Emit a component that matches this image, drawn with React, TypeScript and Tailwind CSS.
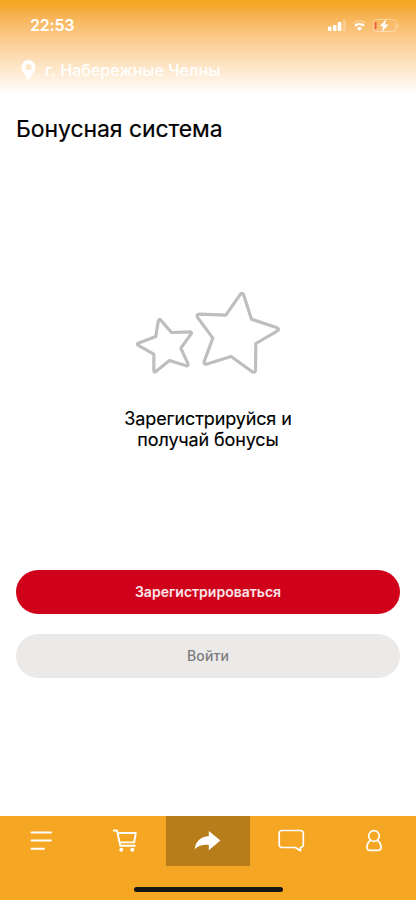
import type { ReactNode } from 'react';

interface NavItem {
  label: string;
  active?: boolean;
  icon: ReactNode;
}

const NAV_ITEMS: NavItem[] = [
  {
    label: 'menu',
    icon: <path d="M5.500 7.500h19.500M5.500 15.500h19.500M5.500 23.700h12.500" strokeWidth="1.900" />,
  },
  {
    label: 'cart',
    icon: (
      <>
        <path d="M4.700 5.500h3.300l3.300 15.200h14.500M8.500 8h18.300l-1.600 9.400H10.700" strokeWidth="1.900" />
        <circle cx="12.300" cy="24.700" r="2" fill="currentColor" stroke="none" />
        <circle cx="23.300" cy="24.700" r="2" fill="currentColor" stroke="none" />
      </>
    ),
  },
  {
    label: 'share',
    active: true,
    icon: (
      <path
        d="M16.800 6L28.400 15.600 16.800 25.300v-5.400c-6-.2-10.300.7-14 4.400C3.300 16.500 8.500 11.600 16.800 11.200z"
        fill="currentColor"
        stroke="none"
      />
    ),
  },
  {
    label: 'chat',
    icon: (
      <path
        d="M7 5.500h18.500a2.800 2.800 0 0 1 2.800 2.800v11.400a2.800 2.800 0 0 1-2.800 2.800v3.200L20.300 22.500H7a2.800 2.800 0 0 1-2.800-2.800V8.300A2.800 2.800 0 0 1 7 5.500z"
        strokeWidth="1.700"
      />
    ),
  },
  {
    label: 'profile',
    icon: (
      <>
        <circle cx="16" cy="11" r="5.300" strokeWidth="1.700" />
        <path
          d="M12.700 15.300c-2.400 1.500-3.700 4.100-3.700 7.300 0 1.800.9 2.700 2.500 2.700h9c1.600 0 2.500-.9 2.500-2.700 0-3.200-1.300-5.800-3.700-7.300"
          strokeWidth="1.700"
        />
      </>
    ),
  },
];

function StatusIcons() {
  return (
    <svg className="h-4 w-[72px] text-white" viewBox="0 0 72 16" fill="currentColor">
      <rect x="0" y="9.500" width="3.500" height="4.500" rx="0.800" />
      <rect x="5" y="8" width="3.500" height="6" rx="0.800" />
      <rect x="9.700" y="5" width="3.700" height="9" rx="0.800" />
      <rect x="14.800" y="2.500" width="3.200" height="11.500" rx="0.800" opacity="0.250" />
      <path d="M25.300 6.200a9.500 9.500 0 0 1 12.500 0" fill="none" stroke="currentColor" strokeWidth="2" opacity="0.250" />
      <path d="M27 8.900a6.800 6.800 0 0 1 9 0" fill="none" stroke="currentColor" strokeWidth="2.300" />
      <path d="M28.900 11.200a3.900 3.900 0 0 1 5.200 0l-2.600 2.800z" />
      <rect x="45.500" y="2.500" width="22.500" height="12" rx="3.300" fill="none" stroke="currentColor" strokeOpacity="0.400" />
      <path d="M69.500 6.500c1.600.5 1.600 3.500 0 4z" opacity="0.400" />
      <rect x="46.500" y="4.800" width="2" height="7.400" rx="0.600" fill="#ee6340" />
      <path d="M58.300 2l-6.600 7.300h3.600L53.700 15l7-7.600H57z" />
    </svg>
  );
}

function Stars() {
  return (
    <svg
      className="h-[86px] w-[146px]"
      viewBox="45.500 28.500 438 258"
      fill="none"
      stroke="#bebebe"
      strokeWidth="9.500"
      strokeLinejoin="round"
    >
      <path d="M362 41q5-6 9 1l24 74 77 26q7 4 1 9l-65 38-1 81q-3 8-10 4l-63-46-75 23q-8 0-6-8l26-70-47-64q-2-7 6-8l80 3z" />
      <path d="M117 119q3-5 6 0l32 37 56-2q6 2 3 6l-31 43 22 48q0 6-6 5l-50-16-42 34q-5 2-5-4V221l-48-27q-4-4 1-6l53-20 7-45z" />
    </svg>
  );
}

function BottomNav() {
  return (
    <nav className="flex h-[84px] flex-col bg-[#f5a623]">
      <div className="flex h-[50px]">
        {NAV_ITEMS.map(item => (
          <button
            key={item.label}
            aria-label={item.label}
            className={`flex flex-1 items-center justify-center text-white ${
              item.active ? 'bg-[#b87d1b]' : ''
            }`}
          >
            <svg
              className="size-8"
              viewBox="0 0 32 32"
              fill="none"
              stroke="currentColor"
              strokeLinecap="round"
              strokeLinejoin="round"
            >
              {item.icon}
            </svg>
          </button>
        ))}
      </div>
      <div className="mx-auto mt-[21px] h-[5px] w-[149px] rounded-full bg-[#151515]" />
    </nav>
  );
}

export default function App() {
  return (
    <div className="flex h-[900px] w-[416px] flex-col overflow-hidden bg-white font-['Inter','Liberation_Sans',sans-serif] text-black">
      <header className="h-[94px] bg-linear-to-b from-[#f5a623] from-4% to-white text-white">
        <div className="flex h-[50px] items-center justify-between pr-[16px] pl-[30px]">
          <span className="text-[16px] font-semibold tracking-[-0.2px]">22:53</span>
          <StatusIcons />
        </div>
        <div className="flex h-10 items-center pl-[21px]">
          <svg className="h-[21px] w-[15px]" viewBox="0 0 15 21" fill="currentColor">
            <path
              fillRule="evenodd"
              d="M7.500 0A7 7 0 0 0 .5 7c0 4.500 4.500 9 7 13.500 2.500-4.500 7-9 7-13.500a7 7 0 0 0-7-7zm0 4.200a3 3 0 1 1 0 6 3 3 0 0 1 0-6z"
            />
          </svg>
          <span className="ml-[9px] text-[16px] font-medium tracking-[0.05px]">г. Набережные Челны</span>
        </div>
      </header>

      <h1 className="mt-[20px] pl-4 text-[23px] leading-[30px] font-normal tracking-[-0.08px] [-webkit-text-stroke:0.2px_black]">
        Бонусная система
      </h1>

      <main className="flex flex-1 flex-col px-4">
        <div className="mt-[146px] flex flex-col items-center">
          <Stars />
          <p className="mt-[32px] text-center text-[18px] leading-[21px] tracking-[-0.13px] [-webkit-text-stroke:0.15px_black]">
            Зарегистрируйся и
            <br />
            получай бонусы
          </p>
        </div>
        <button className="mt-[120px] h-11 rounded-full bg-[#d0021b] pb-0.5 text-[14px] font-semibold text-white/90">
          Зарегистрироваться
        </button>
        <button className="mt-5 h-11 rounded-full bg-[#ebeae9] pb-0.5 text-[14px] font-medium tracking-[0.1px] text-[#7b7b7b]">
          Войти
        </button>
      </main>

      <BottomNav />
    </div>
  );
}
